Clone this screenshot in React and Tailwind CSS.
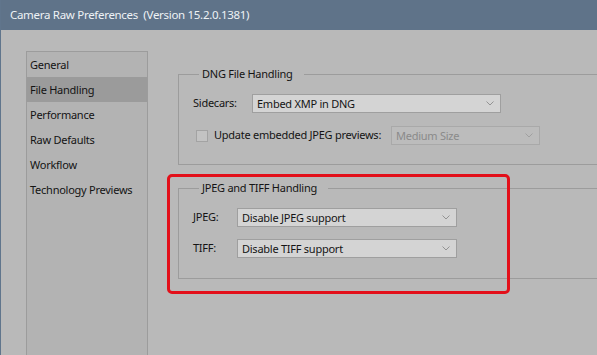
const sections = ["General", "File Handling", "Performance", "Raw Defaults", "Workflow", "Technology Previews"];

function Chevron({ color = "#8c8c8c" }) {
    return (
        <svg width="8" height="5" viewBox="0 0 8 5" className="shrink-0">
            <polyline points="0.5,0.5 4,4 7.5,0.5" fill="none" stroke={color} strokeWidth="1" />
        </svg>
    );
}

function Select({ value, width, disabled }) {
    return (
        <div
            className={`flex items-center justify-between h-[19px] pl-[4px] pr-[6px] border shrink-0 ${
                disabled ? "bg-[#bcbcbc] border-[#a9a9a9] text-[#8a8a8a]" : "bg-[#d4d4d4] border-[#9f9f9f] text-[#141414]"
            }`}
            style={{ width }}
        >
            <span className="leading-none whitespace-nowrap">{value}</span>
            <Chevron color={disabled ? "#a0a0a0" : "#939393"} />
        </div>
    );
}

function Group({ title, children, className }) {
    return (
        <fieldset className={`w-[440px] border border-[#9c9c9c] pl-[14px] ${className}`}>
            <legend className="ml-[6px] pl-[3px] pr-[11px] h-[16px] leading-[16px] text-[#141414]">{title}</legend>
            {children}
        </fieldset>
    );
}

export default function App() {
    return (
        <div
            className="relative w-[597px] h-[355px] overflow-hidden bg-[#b9b9b9] border-l border-[#60758c] text-[11px] tracking-[-0.25px] text-[#141414]"
            style={{ fontFamily: '"Noto Sans", "Open Sans", sans-serif' }}
        >
            <div className="h-[30px] flex items-center pl-[9px] bg-[#5f7389] text-[#eef2f5] text-[11.5px] tracking-[-0.3px]">
                Camera Raw Preferences&nbsp;&nbsp;(Version 15.2.0.1381)
            </div>

            <div className="flex items-start pt-[21px] pl-[25px]">
                {/* sidebar */}
                <div className="w-[122px] h-[320px] shrink-0 border border-[#9c9c9c] bg-[#b3b3b3]">
                    {sections.map((s) => (
                        <div
                            key={s}
                            className={`h-[25px] flex items-center pt-[2px] px-[3px] whitespace-nowrap ${s === "File Handling" ? "bg-[#9b9b9b]" : ""}`}
                        >
                            {s}
                        </div>
                    ))}
                </div>

                {/* content */}
                <div className="ml-[30px] mt-[15px] flex flex-col">
                    <Group title="DNG File Handling" className="pb-[19px]">
                        <div className="mt-[12px] flex items-center">
                            <span className="w-[59px] shrink-0">Sidecars:</span>
                            <Select value="Embed XMP in DNG" width={249} />
                        </div>
                        <div className="mt-[13px] flex items-center">
                            <span className="ml-[3px] w-[12px] h-[12px] shrink-0 border border-[#a3a3a3] bg-[#c3c3c3]" />
                            <span className="ml-[6px] w-[177px] shrink-0 whitespace-nowrap">Update embedded JPEG previews:</span>
                            <Select value="Medium Size" width={149} disabled />
                        </div>
                    </Group>

                    <Group title="JPEG and TIFF Handling" className="mt-[15px] pb-[20px]">
                        <div className="mt-[12px] flex items-center">
                            <span className="w-[44px] shrink-0">JPEG:</span>
                            <Select value="Disable JPEG support" width={220} />
                        </div>
                        <div className="mt-[12px] flex items-center">
                            <span className="w-[44px] shrink-0">TIFF:</span>
                            <Select value="Disable TIFF support" width={220} />
                        </div>
                    </Group>
                </div>
            </div>

            {/* annotation */}
            <div className="absolute left-[166px] top-[174px] w-[343px] h-[120px] border-[3px] border-[#e3101a] rounded-[5px]" />
        </div>
    );
}
